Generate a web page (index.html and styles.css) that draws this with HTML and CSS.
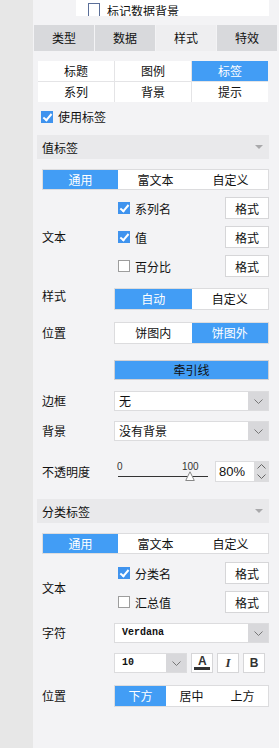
FILE: index.html
```html
<!DOCTYPE html>
<html lang="zh">
<head>
    <meta charset="UTF-8">
    <meta name="viewport" content="width=device-width, initial-scale=1.0">
    <title>标签样式</title>
    <link rel="stylesheet" href="styles.css">
</head>
<body>

    <div class="sidebar"></div>

    <div class="panel">
        <!-- row cut off by the scroll -->
        <div class="top-strip">
            <span class="box"></span>
            <span class="top-text">标记数据背景</span>
        </div>

        <div class="tabs">
            <div class="tab">类型</div>
            <div class="tab">数据</div>
            <div class="tab active">样式</div>
            <div class="tab">特效</div>
        </div>

        <div class="subtabs">
            <div class="cell">标题</div>
            <div class="cell">图例</div>
            <div class="cell on">标签</div>
            <div class="cell">系列</div>
            <div class="cell">背景</div>
            <div class="cell">提示</div>
        </div>

        <div class="use-label">
            <span class="check on"></span>
            <span class="check-text">使用标签</span>
        </div>

        <!-- Value labels -->
        <div class="section-head">
            <span>值标签</span>
            <span class="caret"></span>
        </div>

        <div class="seg seg-wide mt-10">
            <span class="on">通用</span>
            <span>富文本</span>
            <span>自定义</span>
        </div>

        <div class="row mt-7">
            <div class="label">文本</div>
            <div class="ctrl items">
                <div class="item">
                    <span class="check on"></span><span class="name">系列名</span>
                    <button class="fmt">格式</button>
                </div>
                <div class="item">
                    <span class="check on"></span><span class="name">值</span>
                    <button class="fmt">格式</button>
                </div>
                <div class="item">
                    <span class="check"></span><span class="name">百分比</span>
                    <button class="fmt">格式</button>
                </div>
            </div>
        </div>

        <div class="row mt-11">
            <div class="label label-up">样式</div>
            <div class="ctrl seg">
                <span class="on">自动</span>
                <span>自定义</span>
            </div>
        </div>

        <div class="row mt-12">
            <div class="label">位置</div>
            <div class="ctrl seg">
                <span>饼图内</span>
                <span class="on">饼图外</span>
            </div>
        </div>

        <div class="row mt-16">
            <div class="label"></div>
            <div class="ctrl lead-btn">牵引线</div>
        </div>

        <div class="row mt-11">
            <div class="label">边框</div>
            <div class="ctrl select">
                <span class="val">无</span>
                <span class="arrow"><svg width="9" height="5" viewBox="0 0 9 5"><path d="M0.5 0.5 L4.5 4.5 L8.5 0.5" fill="none" stroke="#777" stroke-width="1"/></svg></span>
            </div>
        </div>

        <div class="row mt-10">
            <div class="label">背景</div>
            <div class="ctrl select">
                <span class="val">没有背景</span>
                <span class="arrow"><svg width="9" height="5" viewBox="0 0 9 5"><path d="M0.5 0.5 L4.5 4.5 L8.5 0.5" fill="none" stroke="#777" stroke-width="1"/></svg></span>
            </div>
        </div>

        <div class="row mt-20">
            <div class="label">不透明度</div>
            <div class="ctrl opacity">
                <div class="slider">
                    <span class="tick tick-min">0</span>
                    <span class="tick tick-max">100</span>
                    <span class="track"></span>
                    <svg class="thumb" width="10" height="10" viewBox="0 0 10 10"><path d="M5 0.8 L9.3 9.5 L0.7 9.5 Z" fill="#fff" stroke="#888" stroke-width="1"/></svg>
                </div>
                <div class="spin">
                    <span class="spin-val">80%</span>
                    <span class="spin-btns">
                        <svg width="9" height="5" viewBox="0 0 9 5"><path d="M0.5 4.5 L4.5 0.5 L8.5 4.5" fill="none" stroke="#666" stroke-width="1"/></svg>
                        <svg width="9" height="5" viewBox="0 0 9 5"><path d="M0.5 0.5 L4.5 4.5 L8.5 0.5" fill="none" stroke="#666" stroke-width="1"/></svg>
                    </span>
                </div>
            </div>
        </div>

        <!-- Category labels -->
        <div class="section-head mt-17">
            <span>分类标签</span>
            <span class="caret"></span>
        </div>

        <div class="seg seg-wide mt-10">
            <span class="on">通用</span>
            <span>富文本</span>
            <span>自定义</span>
        </div>

        <div class="row mt-8">
            <div class="label">文本</div>
            <div class="ctrl items">
                <div class="item">
                    <span class="check on"></span><span class="name">分类名</span>
                    <button class="fmt">格式</button>
                </div>
                <div class="item">
                    <span class="check"></span><span class="name">汇总值</span>
                    <button class="fmt">格式</button>
                </div>
            </div>
        </div>

        <div class="row mt-10">
            <div class="label">字符</div>
            <div class="ctrl select">
                <span class="val mono">Verdana</span>
                <span class="arrow"><svg width="9" height="5" viewBox="0 0 9 5"><path d="M0.5 0.5 L4.5 4.5 L8.5 0.5" fill="none" stroke="#777" stroke-width="1"/></svg></span>
            </div>
        </div>

        <div class="row mt-10">
            <div class="label"></div>
            <div class="ctrl font-tools">
                <div class="select size-select">
                    <span class="val mono">10</span>
                    <span class="arrow"><svg width="9" height="5" viewBox="0 0 9 5"><path d="M0.5 0.5 L4.5 4.5 L8.5 0.5" fill="none" stroke="#777" stroke-width="1"/></svg></span>
                </div>
                <button class="tool tool-color"><span class="a">A</span><span class="bar"></span></button>
                <button class="tool tool-italic">I</button>
                <button class="tool tool-bold">B</button>
            </div>
        </div>

        <div class="row mt-12">
            <div class="label">位置</div>
            <div class="ctrl seg">
                <span class="on">下方</span>
                <span>居中</span>
                <span>上方</span>
            </div>
        </div>
    </div>

</body>
</html>
```

FILE: styles.css
```css
body {
    margin: 0;
    display: flex;
    height: 748px;
    overflow: hidden;
    background-color: #f3f3f5;
    font-family: "Noto Sans CJK SC", "Liberation Sans", sans-serif;
    font-size: 12px;
    color: #111;
}

.sidebar {
    width: 33px;
    flex-shrink: 0;
    background-color: #e7e7e7;
}

.panel {
    flex: 1;
}

/* half visible row at the top */
.top-strip {
    margin-left: 43px;
    width: 193px;
    height: 16px;
    background-color: #fff;
    overflow: hidden;
    display: flex;
    align-items: flex-start;
}

.top-strip .box {
    margin: 3px 0 0 12px;
    width: 12px;
    height: 15px;
    box-sizing: border-box;
    border: 1px solid #5b6f99;
}

.top-text {
    margin: 5px 0 0 7px;
    line-height: 12px;
}

/* main tabs */
.tabs {
    display: flex;
    gap: 1px;
    margin: 9px 0 0 1px;
}

.tab {
    width: 60px;
    height: 26px;
    line-height: 26px;
    text-align: center;
    background-color: #d8d9dc;
}

.tab.active {
    background-color: #eeeef0;
}

.subtabs {
    display: grid;
    grid-template-columns: repeat(3, 76px);
    grid-auto-rows: 20px;
    gap: 1px;
    width: 230px;
    margin: 10px 0 0 5px;
    background-color: #e4e4e6;
}

.cell {
    background-color: #fff;
    text-align: center;
    line-height: 20px;
}

.cell.on {
    background-color: #429df5;
    color: #fff;
}

/* checkboxes */
.check {
    position: relative;
    display: inline-block;
    flex-shrink: 0;
    width: 12px;
    height: 12px;
    box-sizing: border-box;
    border: 1px solid #9d9d9d;
    background-color: #fff;
}

.check.on {
    border-color: #3f93ee;
    background-color: #3f93ee;
}

.check.on::after {
    content: "";
    position: absolute;
    left: 3px;
    top: 0px;
    width: 3px;
    height: 7px;
    border: solid #fff;
    border-width: 0 2px 2px 0;
    transform: rotate(40deg);
}

.use-label {
    display: flex;
    align-items: center;
    height: 12px;
    margin: 9px 0 0 8px;
}

.check-text {
    margin-left: 5px;
    line-height: 12px;
}

/* collapsible section header */
.section-head {
    display: flex;
    justify-content: space-between;
    align-items: center;
    width: 232px;
    height: 24px;
    box-sizing: border-box;
    margin: 12px 0 0 4px;
    padding: 0 6px 0 5px;
    background-color: #e9e9eb;
}

.caret {
    width: 0;
    height: 0;
    border-left: 4px solid transparent;
    border-right: 4px solid transparent;
    border-top: 4px solid #a9a9ab;
}

/* segmented buttons */
.seg {
    display: flex;
    height: 22px;
    box-sizing: border-box;
    border: 1px solid #dcdcde;
    background-color: #fff;
}

.seg span {
    flex: 1;
    text-align: center;
    line-height: 20px;
}

.seg span.on {
    background-color: #429df5;
    color: #fff;
}

.seg-wide {
    width: 227px;
    height: 21px;
    margin-left: 9px;
}

.seg-wide span {
    line-height: 19px;
}

/* label + control rows */
.row {
    display: flex;
    align-items: center;
    width: 227px;
    margin-left: 9px;
}

.label {
    width: 72px;
    flex-shrink: 0;
    line-height: 14px;
}

.label-up {
    align-self: flex-start;
    margin-top: 1px;
}

.ctrl {
    flex: 1;
}

.items {
    display: flex;
    flex-direction: column;
    gap: 7px;
}

.item {
    display: flex;
    align-items: center;
    height: 22px;
    padding-left: 4px;
}

.name {
    margin-left: 5px;
}

.fmt {
    margin-left: auto;
    width: 44px;
    height: 22px;
    padding: 0;
    border: 1px solid #d6d6d8;
    background-color: #fff;
    font-family: inherit;
    font-size: 12px;
    color: #111;
}

.lead-btn {
    height: 20px;
    line-height: 18px;
    box-sizing: border-box;
    border: 1px solid #d0d0d4;
    background-color: #429df5;
    text-align: center;
}

/* dropdowns */
.select {
    display: flex;
    height: 20px;
    box-sizing: border-box;
    border: 1px solid #dcdcde;
    background-color: #fff;
}

.select .val {
    flex: 1;
    padding-left: 4px;
    line-height: 18px;
}

.select .arrow {
    width: 20px;
    display: flex;
    align-items: center;
    justify-content: center;
    background-color: #d8d8db;
}

.mono {
    font-family: "Liberation Mono", monospace;
    font-size: 10px;
    font-weight: bold;
}

.select .val.mono {
    padding-left: 7px;
}

/* opacity slider */
.opacity {
    display: flex;
    align-items: center;
    height: 21px;
}

.slider {
    position: relative;
    width: 94px;
    height: 21px;
}

.tick {
    position: absolute;
    top: 1px;
    font-family: "Liberation Sans", sans-serif;
    font-size: 10px;
    line-height: 10px;
    color: #333;
}

.tick-min {
    left: 3px;
}

.tick-max {
    left: 68px;
}

.track {
    position: absolute;
    left: 4px;
    right: 0;
    top: 15px;
    height: 1px;
    background-color: #333;
}

.thumb {
    position: absolute;
    left: 71px;
    top: 10px;
}

.spin {
    display: flex;
    width: 54px;
    height: 21px;
    margin-left: 7px;
    box-sizing: border-box;
    border: 1px solid #dcdcde;
    background-color: #fff;
}

.spin-val {
    flex: 1;
    padding-left: 3px;
    font-family: "Liberation Sans", sans-serif;
    font-size: 13px;
    line-height: 19px;
}

.spin-btns {
    width: 14px;
    display: flex;
    flex-direction: column;
    justify-content: space-around;
    align-items: center;
    background-color: #dcdcde;
}

/* font tools */
.font-tools {
    display: flex;
    gap: 4px;
    height: 20px;
}

.size-select {
    width: 73px;
}

.size-select .val.mono {
    padding-left: 7px;
}

.tool {
    position: relative;
    width: 22px;
    height: 20px;
    padding: 0;
    box-sizing: border-box;
    border: 1px solid #d6d6d8;
    background-color: #fff;
    color: #333;
}

.tool-color .a {
    position: absolute;
    left: 6px;
    top: 1px;
    font-family: "Liberation Sans", sans-serif;
    font-weight: bold;
    font-size: 12px;
    line-height: 12px;
}

.tool-color .bar {
    position: absolute;
    left: 2px;
    right: 2px;
    bottom: 2px;
    height: 3px;
    background-color: #333;
}

.tool-italic {
    font-family: "Liberation Serif", serif;
    font-style: italic;
    font-weight: bold;
    font-size: 13px;
}

.tool-bold {
    font-family: "Liberation Sans", sans-serif;
    font-weight: bold;
    font-size: 12px;
}

/* spacing helpers */
.mt-7 { margin-top: 7px; }
.mt-8 { margin-top: 8px; }
.mt-10 { margin-top: 10px; }
.mt-11 { margin-top: 11px; }
.mt-12 { margin-top: 12px; }
.mt-16 { margin-top: 16px; }
.mt-17 { margin-top: 17px; }
.mt-20 { margin-top: 20px; }
```
